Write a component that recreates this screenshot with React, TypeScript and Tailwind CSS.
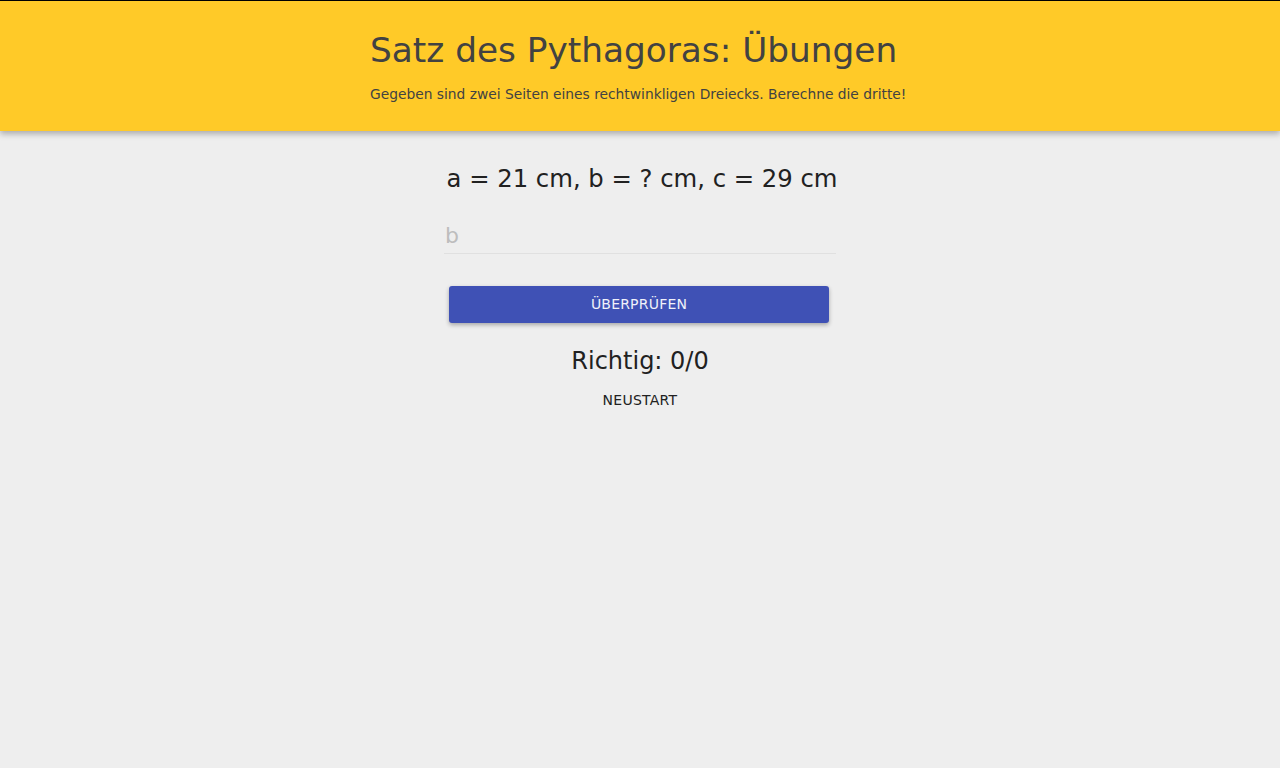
import React from 'react';

const App: React.FC = () => {
  return (
    <div className="min-h-[768px] bg-[#eeeeee] font-['DejaVu_Sans',sans-serif]">
      {/* Header */}
      <header className="relative border-t border-black bg-[#ffca28] shadow-[0_3px_6px_rgba(0,0,0,0.28)]">
        <div className="mx-auto w-[540px] pt-[27px] pb-[27px] text-[#424242]">
          <h1 className="text-[34.3px] leading-[44px]">Satz des Pythagoras: Übungen</h1>
          <p className="mt-[12px] whitespace-nowrap text-[13.8px] leading-[20px]">
            Gegeben sind zwei Seiten eines rechtwinkligen Dreiecks. Berechne die dritte!
          </p>
        </div>
      </header>

      {/* Exercise */}
      <main className="mx-auto flex w-[392px] flex-col items-center pt-[32px] text-[#212121]">
        <div className="translate-x-[2px] whitespace-nowrap text-[24.3px] leading-[32px]">
          a = 21 cm, b = ? cm, c = 29 cm
        </div>

        <input
          className="mt-[26px] w-full border-b border-[#e0e0e0] bg-transparent px-[1px] pb-[2px] text-[22px] leading-[30px] outline-none placeholder:text-[#bdbdbd]"
          placeholder="b"
        />

        <button className="mt-[32px] h-[37px] w-[380px] -translate-x-[1px] rounded-[3px] bg-[#3f51b5] text-[14px] tracking-[0.2px] text-[#f0f1fa] uppercase shadow-[0_2px_4px_rgba(0,0,0,0.3)]">
          Überprüfen
        </button>

        <div className="mt-[22px] text-[24px] leading-[32px]">Richtig: 0/0</div>

        <button className="mt-[13px] text-[14px] leading-[20px] tracking-[0.25px] uppercase">Neustart</button>
      </main>
    </div>
  );
};

export default App;
